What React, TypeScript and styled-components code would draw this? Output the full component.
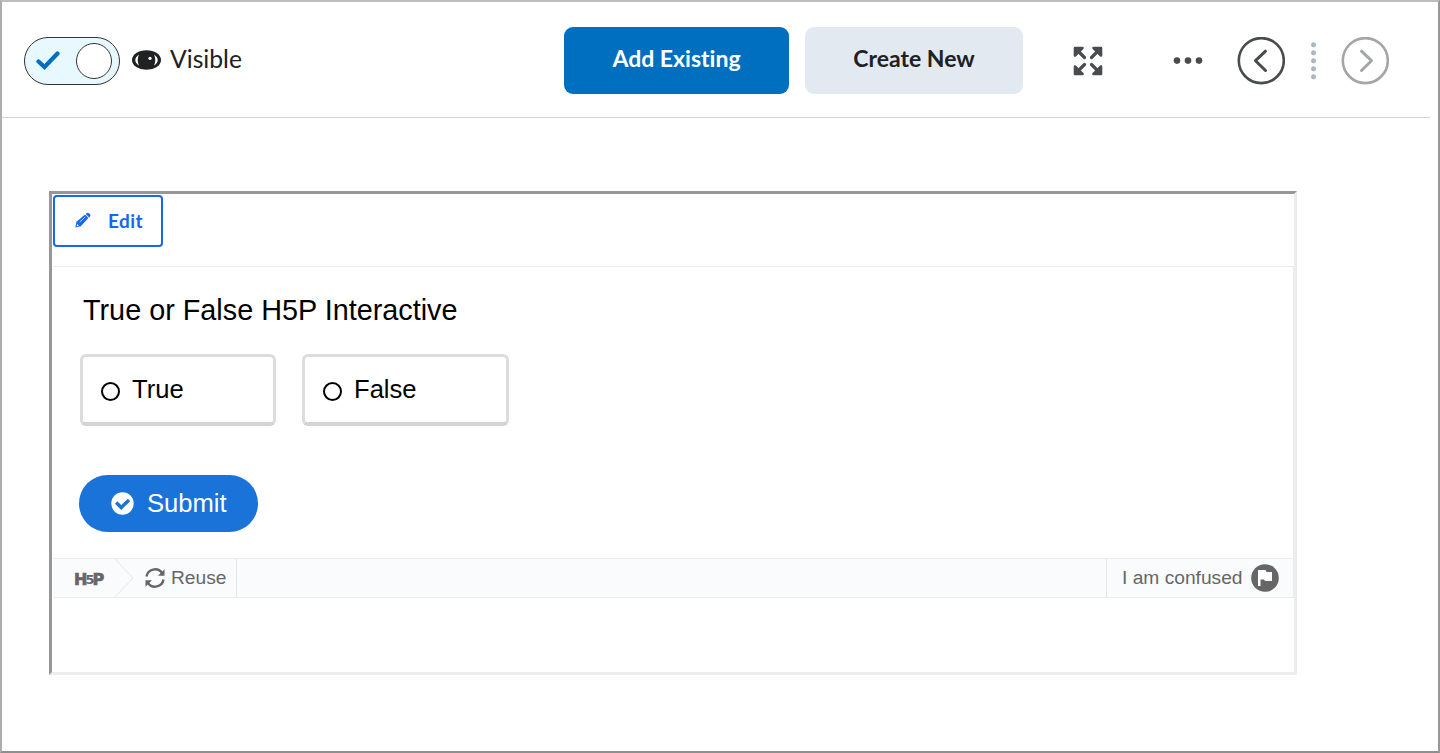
import React from 'react';
import styled, { createGlobalStyle } from 'styled-components';

const Global = createGlobalStyle`
  *, *::before, *::after { box-sizing: border-box; }
  body { margin: 0; background: #fff; }
  button { font: inherit; margin: 0; padding: 0; border: 0; background: none; }
  svg { display: block; flex: none; }
`;

const Page = styled.div`
  height: 753px;
  border: 2px solid;
  border-color: #bdbdbd #979797 #8e8e8e #adadad;
  font-family: Lato, sans-serif;
  font-variant-ligatures: none;
  color: #202122;
`;

const Toolbar = styled.header`
  display: flex;
  align-items: center;
  width: 1428px;
  height: 116px;
  padding-left: 22px;
  border-bottom: 1px solid #cdd5dc;
`;

const Toggle = styled.button`
  display: flex;
  align-items: center;
  justify-content: space-between;
  width: 96px;
  height: 48px;
  margin-top: 2px;
  padding: 0 7px 0 11px;
  border: 1.5px solid #303335;
  border-radius: 24px;
  background: #e8f8ff;
`;

const Knob = styled.span`
  width: 36px;
  height: 36px;
  border: 1.5px solid #303335;
  border-radius: 50%;
  background: #fff;
`;

const VisibleLabel = styled.span`
  display: flex;
  align-items: center;
  gap: 9px;
  width: 432px;
  margin: 0 0 1px 12px;
  font-size: 24.7px;
  line-height: 32px;

  svg {
    margin-top: 2px;
  }
`;

const ActionButton = styled.button<{ $primary?: boolean }>`
  width: ${(p) => (p.$primary ? 225 : 218)}px;
  height: 67px;
  margin-top: 2px;
  margin-right: ${(p) => (p.$primary ? 16 : 50)}px;
  padding-bottom: 5px;
  border-radius: 9px;
  background: ${(p) => (p.$primary ? '#006fbf' : '#e3e9f1')};
  color: ${(p) => (p.$primary ? '#fff' : '#202122')};
  font-size: 23px;
  font-weight: 700;
`;

const IconButton = styled.button<{ $gap: number }>`
  margin-top: 2px;
  margin-right: ${(p) => p.$gap}px;
`;

const Frame = styled.main`
  width: 1248px;
  height: 484px;
  margin: 73px 0 0 47px;
  padding: 1px 0 0 1px;
  border: 3px solid;
  border-color: #979797 #ededed #ededed #979797;
  font-family: "Liberation Sans", Arial, sans-serif;
`;

const EditBar = styled.div`
  height: 72px;
  border-bottom: 1px solid #ececec;
`;

const EditButton = styled.button`
  display: flex;
  align-items: center;
  gap: 17px;
  width: 110px;
  height: 52px;
  padding: 0 0 2px 20px;
  border: 2px solid #1967ee;
  border-radius: 4px;
  color: #1967ee;
  font-family: Lato, sans-serif;
  font-size: 19px;
  font-weight: 700;
  letter-spacing: 0.4px;
`;

const Question = styled.section`
  height: 291px;
  padding: 27px 0 0 27px;
  border-right: 1px solid #ececec;
`;

const Prompt = styled.p`
  margin: 0 0 27px 3px;
  color: #000;
  font-size: 28.8px;
  line-height: 33px;
`;

const Answers = styled.div`
  display: flex;
  gap: 26px;
`;

const Answer = styled.div<{ $width: number }>`
  display: flex;
  align-items: center;
  gap: 12px;
  width: ${(p) => p.$width}px;
  height: 72px;
  padding-left: 18px;
  border: 3px solid #dcdcdc;
  border-bottom: 4px solid #d3d3d3;
  border-radius: 6px;
  color: #000;
  font-size: 25.6px;
`;

const Radio = styled.span`
  width: 19px;
  height: 19px;
  margin-top: 4px;
  border: 2px solid #000;
  border-radius: 50%;
`;

const Submit = styled.button`
  display: flex;
  align-items: center;
  gap: 13px;
  width: 179px;
  height: 57px;
  margin: 49px 0 0 -1px;
  padding-left: 32px;
  border-radius: 29px;
  background: #1a73d9;
  color: #fff;
  font-size: 25.6px;
`;

const Footer = styled.footer`
  display: flex;
  justify-content: space-between;
  height: 40px;
  border: 1px solid #ebecee;
  border-left: 0;
  background: #fafbfd;
  color: #666;
  font-size: 19.2px;
`;

const FooterGroup = styled.div`
  display: flex;
  align-items: center;
`;

const Logo = styled.span`
  display: flex;
  align-items: center;
  width: 62px;
  padding: 2px 0 0 21px;
  font-family: "DejaVu Sans", sans-serif;
  font-size: 16px;
  font-weight: 700;
  -webkit-text-stroke: 0.7px #666;
`;

const LogoDigit = styled.span`
  margin: 0 -2px;
  font-size: 13px;
  -webkit-text-stroke: 0;
`;

const Reuse = styled.button`
  display: flex;
  align-items: center;
  gap: 6px;
  width: 103px;
  height: 38px;
  padding-left: 11px;
  border-right: 1px solid #e5e6e8;
  color: #666;
`;

const Confused = styled.button`
  display: flex;
  align-items: center;
  gap: 8px;
  width: 187px;
  padding-left: 15px;
  border-left: 1px solid #e5e6e8;
  color: #666;
`;

const ArrowNav = ({ next }: { next?: boolean }) => (
  <svg width="48" height="48" viewBox="0 0 48 48" fill="none" stroke={next ? '#a4a5a6' : '#494c4e'}>
    <circle cx="24.3" cy="23.6" r="22.5" strokeWidth="2.6" />
    <path d={next ? 'M20.5 14.2L30.5 23.7L20.5 33.5' : 'M28.5 14.2L18.5 23.7L28.5 33.5'} strokeWidth="3" strokeLinecap="round" strokeLinejoin="round" />
  </svg>
);

export default function App() {
  return (
    <Page>
      <Global />
      <Toolbar>
        <Toggle aria-label="Visibility">
          <svg width="24" height="20" viewBox="0 0 24 20" fill="none" stroke="#006fbf" strokeWidth="4.2" strokeLinecap="round">
            <path d="M2.5 10.5L8.5 16L21.5 2.5" />
          </svg>
          <Knob />
        </Toggle>
        <VisibleLabel>
          <svg width="29" height="20" viewBox="0 0 29 20">
            <ellipse cx="14.5" cy="10" rx="14.5" ry="9.8" fill="#202122" />
            <path d="M7 4.5Q-.5 10 7 15.5Q4.4 10 7 4.5M22 4.5Q29.5 10 22 15.5Q24.6 10 22 4.5" fill="#fff" />
            <circle cx="18" cy="8.3" r="1.6" fill="#fff" />
          </svg>
          Visible
        </VisibleLabel>
        <ActionButton $primary>Add Existing</ActionButton>
        <ActionButton>Create New</ActionButton>
        <IconButton $gap={70} aria-label="Full screen">
          <svg width="30" height="30" viewBox="0 0 30 30" fill="#494c4e" stroke="#494c4e">
            <g id="corner">
              <path d="M2 2H9.5L2 9.5Z" strokeWidth="2.6" strokeLinejoin="round" />
              <path d="M4 4L11.5 11.5" strokeWidth="3.2" strokeLinecap="round" />
            </g>
            <use href="#corner" transform="rotate(90 15 15)" />
            <use href="#corner" transform="rotate(180 15 15)" />
            <use href="#corner" transform="rotate(270 15 15)" />
          </svg>
        </IconButton>
        <IconButton $gap={34} aria-label="More">
          <svg width="30" height="8" viewBox="0 0 30 8" fill="#494c4e">
            <circle cx="4" cy="3.6" r="3.3" /><circle cx="15" cy="3.6" r="3.3" /><circle cx="26" cy="3.6" r="3.3" />
          </svg>
        </IconButton>
        <IconButton $gap={25} aria-label="Previous"><ArrowNav /></IconButton>
        <IconButton $gap={25} as="span">
          <svg width="6" height="38" viewBox="0 0 6 38" fill="#adb6be">
            {[3, 11, 19, 27, 35].map((y) => <circle key={y} cx="3.5" cy={y - 0.3} r="2.5" />)}
          </svg>
        </IconButton>
        <IconButton $gap={0} aria-label="Next"><ArrowNav next /></IconButton>
      </Toolbar>
      <Frame>
        <EditBar>
          <EditButton>
            <svg width="16" height="16" viewBox="0 0 16 16" fill="#1967ee">
              <path d="M1.5 9.8L10 2.6L13.4 6L5.8 14.2L.3 15.5Z" />
              <path d="M10.8 2L12 1Q13 .2 14 1.2L15.1 2.3Q16 3.4 15 4.4L14 5.4Z" />
              <path d="M2.1 12L3.9 13.8L1.7 14.3Z" fill="#fff" />
              <path d="M4.7 10L10.2 5" stroke="#fff" strokeWidth=".7" />
            </svg>
            Edit
          </EditButton>
        </EditBar>
        <Question>
          <Prompt>True or False H5P Interactive</Prompt>
          <Answers>
            <Answer $width={196}><Radio />True</Answer>
            <Answer $width={207}><Radio />False</Answer>
          </Answers>
          <Submit>
            <svg width="23" height="23" viewBox="0 0 23 23" fill="none">
              <circle cx="11.5" cy="11.5" r="11.2" fill="#fff" />
              <path d="M5.2 10.5L10.2 15.5L18 8" stroke="#1a73d9" strokeWidth="3.4" />
            </svg>
            Submit
          </Submit>
        </Question>
        <Footer>
          <FooterGroup>
            <Logo>H<LogoDigit>5</LogoDigit>P</Logo>
            <svg width="19" height="38" viewBox="0 0 19 38" fill="none" stroke="#e5e6e8"><path d="M0 0L18 19L0 38" /></svg>
            <Reuse>
              <svg width="20" height="20" viewBox="0 0 20 20" fill="none" stroke="#666" strokeWidth="2.4">
                <path d="M1.5 8.5A8.6 8.6 0 0 1 17 5M18.5 11.5A8.6 8.6 0 0 1 3 15" />
                <path d="M19.5 1.2V7.8H13ZM.5 18.8V12.2H7Z" fill="#666" stroke="none" />
              </svg>
              Reuse
            </Reuse>
          </FooterGroup>
          <Confused>
            I am confused
            <svg width="28" height="28" viewBox="0 0 28 28">
              <circle cx="14" cy="14" r="13.8" fill="#666" />
              <path d="M7 6H14.5L15.5 8H21V17H14L13 15.5H9.5V22H7Z" fill="#fff" />
            </svg>
          </Confused>
        </Footer>
      </Frame>
    </Page>
  );
}
